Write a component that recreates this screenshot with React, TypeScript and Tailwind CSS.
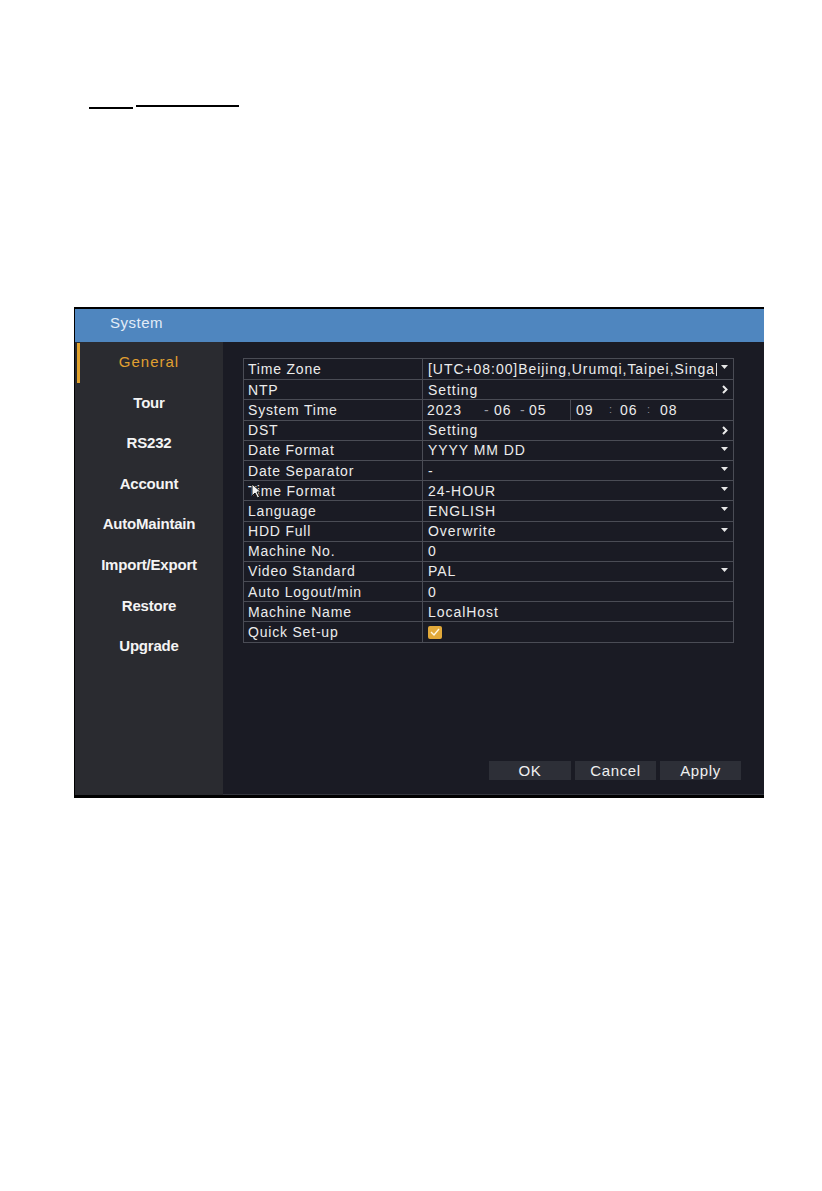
import React from 'react';

const menu = ['General', 'Tour', 'RS232', 'Account', 'AutoMaintain', 'Import/Export', 'Restore', 'Upgrade'];

type Row = { label: string; value?: string; kind?: 'drop' | 'arrow' | 'time' | 'check' | 'text' };

const rows: Row[] = [
  { label: 'Time Zone', value: '[UTC+08:00]Beijing,Urumqi,Taipei,Singa', kind: 'drop' },
  { label: 'NTP', value: 'Setting', kind: 'arrow' },
  { label: 'System Time', kind: 'time' },
  { label: 'DST', value: 'Setting', kind: 'arrow' },
  { label: 'Date Format', value: 'YYYY MM DD', kind: 'drop' },
  { label: 'Date Separator', value: '-', kind: 'drop' },
  { label: 'Time Format', value: '24-HOUR', kind: 'drop' },
  { label: 'Language', value: 'ENGLISH', kind: 'drop' },
  { label: 'HDD Full', value: 'Overwrite', kind: 'drop' },
  { label: 'Machine No.', value: '0', kind: 'text' },
  { label: 'Video Standard', value: 'PAL', kind: 'drop' },
  { label: 'Auto Logout/min', value: '0', kind: 'text' },
  { label: 'Machine Name', value: 'LocalHost', kind: 'text' },
  { label: 'Quick Set-up', kind: 'check' },
];

function DropArrow() {
  return (
    <svg width="7" height="4" viewBox="0 0 7 4" className="shrink-0 self-start mt-[6px]">
      <polygon points="0,0 7,0 3.5,4" fill="#e6e6e6" />
    </svg>
  );
}

function Chevron() {
  return (
    <svg width="6" height="9" viewBox="0 0 6 9" className="shrink-0">
      <polyline points="1,1 4.5,4.5 1,8" fill="none" stroke="#ececec" strokeWidth="2" />
    </svg>
  );
}

function TimeValue() {
  return (
    <div className="flex h-full items-center">
      <span className="pl-[4px] w-[61px]">2023</span>
      <span className="w-[10px] text-[#9a9ca4]">-</span>
      <span className="w-[26px]">06</span>
      <span className="w-[9px] text-[#9a9ca4]">-</span>
      <span className="w-[41px]">05</span>
      <div className="h-full border-l border-[#4a4c55]" />
      <span className="pl-[5px] w-[38px]">09</span>
      <span className="w-[11px] text-[#8a8c94] text-[11px]">:</span>
      <span className="w-[27px]">06</span>
      <span className="w-[13px] text-[#8a8c94] text-[11px]">:</span>
      <span>08</span>
    </div>
  );
}

function Cursor() {
  return (
    <svg width="11" height="16" viewBox="0 0 11 16" className="absolute left-[7px] top-[2px]">
      <path d="M1 1 L1 13 L4 10 L6.5 15 L8.5 14 L6 9 L10 9 Z" fill="#f2f2f2" stroke="#111" strokeWidth="1" />
    </svg>
  );
}

export default function App() {
  return (
    <div className="w-[822px] h-[1191px] bg-white" style={{ fontFamily: '"Liberation Sans", Arial, sans-serif' }}>
      <div className="flex items-start pt-[105px] pl-[89px]">
        <div className="w-[44px] h-[2px] mt-[2px] bg-black" />
        <div className="w-[103px] h-[2px] ml-[3px] bg-black" />
      </div>

      <div className="ml-[74px] mt-[198px] w-[690px] h-[491px] flex flex-col border-t-2 border-b-[3px] border-l border-black bg-black">
        <div className="h-[33px] bg-[#4f86bf] flex items-center pl-[35px] pb-[5px] text-[15px] text-[#e2ecf7] tracking-[0.5px]">
          System
        </div>
        <div className="flex flex-1">
          <div className="w-[148px] bg-[#2a2b30] flex flex-col">
            {menu.map((m, i) => (
              <div key={m} className="relative h-[40.6px] flex items-center justify-center">
                {i === 0 && <div className="absolute left-[2px] top-[1px] w-[3px] h-[40px] bg-[#e0a12c]" />}
                <span
                  className={
                    i === 0
                      ? 'text-[15px] text-[#e0a030] tracking-[1px]'
                      : 'text-[15px] font-bold text-[#f4f4f4] tracking-[-0.2px]'
                  }
                >
                  {m}
                </span>
              </div>
            ))}
          </div>

          <div className="flex-1 bg-[#1a1b24] flex flex-col border-b border-[#34363e]">
            <div className="ml-[20px] mt-[16px] w-[491px] border border-[#4a4c55] text-[14px] text-[#ececec] tracking-[0.8px]">
              {rows.map((r, i) => (
                <div key={r.label} className={`flex h-[20.2px] ${i > 0 ? 'border-t border-[#4a4c55]' : ''}`}>
                  <div className="relative w-[179px] shrink-0 border-r border-[#4a4c55] pl-[4px] flex items-center leading-none">
                    {r.label}
                    {r.label === 'Time Format' && <Cursor />}
                  </div>
                  <div className="flex-1 min-w-0 leading-none tracking-[0.95px]">
                    {r.kind === 'time' && <TimeValue />}
                    {(r.kind === 'drop' || r.kind === 'arrow' || r.kind === 'text') && (
                      <div className="flex h-full items-center pl-[5px] pr-[5px] gap-[4px]">
                        <span className="flex-1 min-w-0 whitespace-nowrap flex items-center">
                          {r.value}
                          {i === 0 && <span className="ml-[1px] w-[1px] h-[13px] bg-[#d8d8d8]" />}
                        </span>
                        {r.kind === 'drop' && <DropArrow />}
                        {r.kind === 'arrow' && <Chevron />}
                      </div>
                    )}
                    {r.kind === 'check' && (
                      <div className="flex h-full items-center pl-[5px]">
                        <div className="w-[14px] h-[13px] rounded-[2px] bg-[#e2a93a] flex items-center justify-center">
                          <svg width="10" height="8" viewBox="0 0 10 8">
                            <polyline points="1,4 4,7 9,1" fill="none" stroke="#fff6dd" strokeWidth="1.4" />
                          </svg>
                        </div>
                      </div>
                    )}
                  </div>
                </div>
              ))}
            </div>

            <div className="mt-auto flex justify-end gap-[4px] pr-[23px] pb-[14px]">
              {['OK', 'Cancel', 'Apply'].map((b, i) => (
                <button
                  key={b}
                  type="button"
                  className={`${i === 0 ? 'w-[82px]' : 'w-[81px]'} h-[19px] bg-[#2d2f37] text-[15px] text-[#f0f0f0] tracking-[0.6px] leading-none flex items-center justify-center`}
                >
                  {b}
                </button>
              ))}
            </div>
          </div>
        </div>
      </div>
    </div>
  );
}
